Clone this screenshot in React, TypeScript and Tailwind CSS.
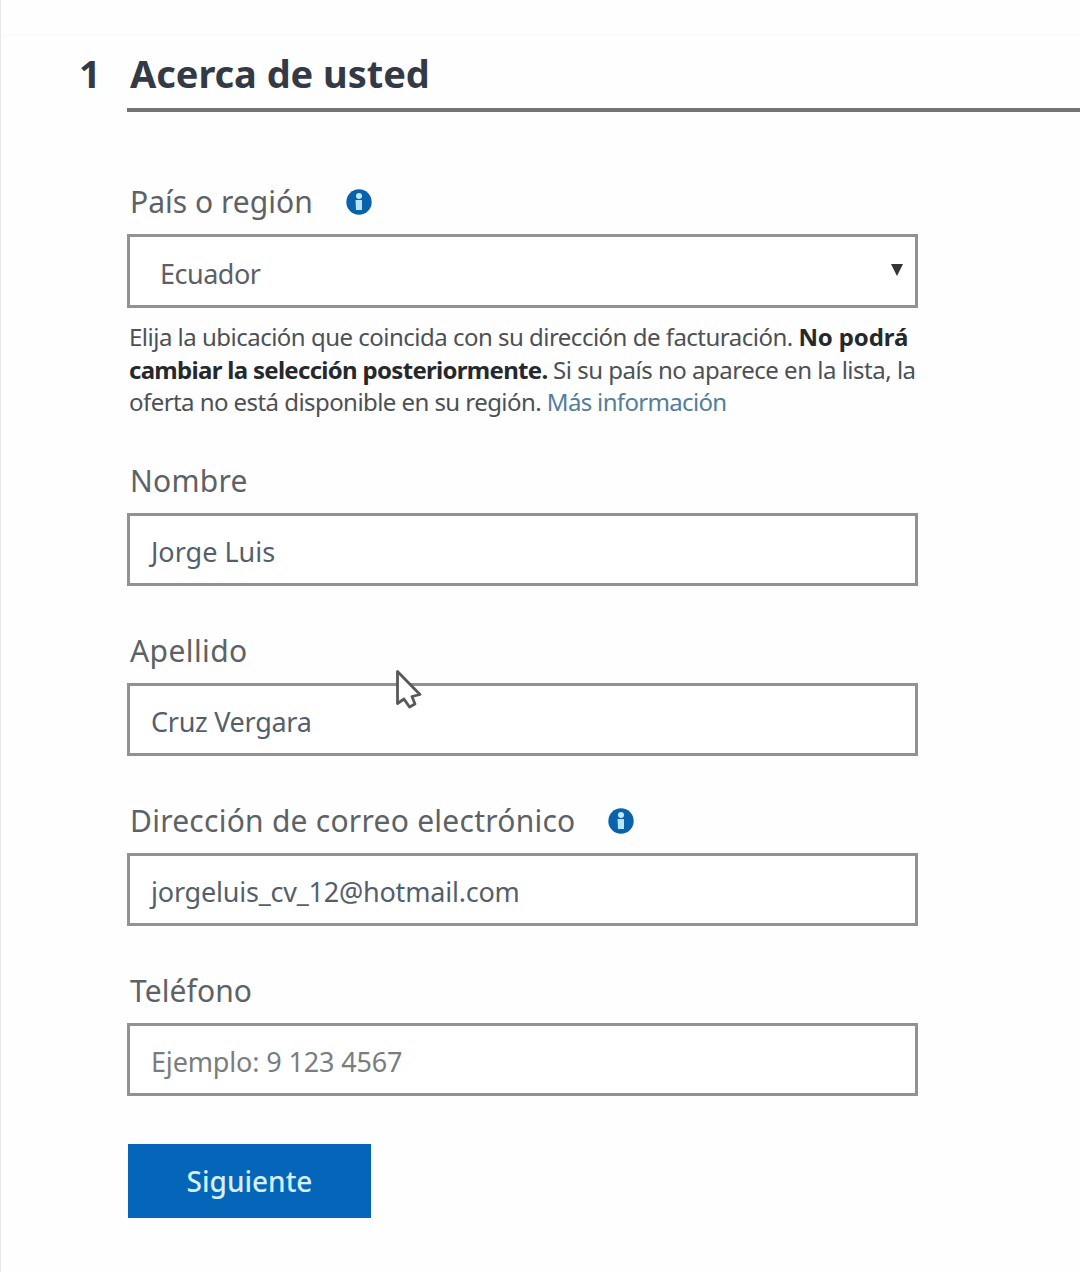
import type { ReactNode } from "react";

function InfoIcon() {
  return (
    <svg viewBox="0 0 26 26" className="size-[26px]" aria-hidden="true">
      <circle cx="13" cy="13" r="12.7" fill="#0862ac" />
      <circle cx="13" cy="7" r="3" fill="#c4e8fc" />
      <path d="M9.500 11h6.500v10h-6z" fill="#b9e2fb" />
    </svg>
  );
}

function Label({ children, tracking, info, gap = "" }: { children: ReactNode; tracking: string; info?: boolean; gap?: string }) {
  return (
    <div className={`flex h-[42px] items-center whitespace-nowrap pl-[3px] text-[30px] leading-[42px] text-[#5d6266] ${gap}`}>
      <span className={tracking}>{children}</span>
      {info && <InfoIcon />}
    </div>
  );
}

function Field({ children, className = "" }: { children: ReactNode; className?: string }) {
  return (
    <div className={`flex w-[791px] items-center whitespace-nowrap border-[3px] border-[#929292] bg-white pl-[21px] pt-1.5 text-[27px] ${className}`}>
      {children}
    </div>
  );
}

function Cursor() {
  return (
    <svg viewBox="0 0 30 42" className="absolute left-[267px] -top-[15px] h-[42px] w-[30px]" aria-hidden="true">
      <path d="M3.500 3.500v32l6.500-4.500 5.500 8 5.500-3-3-7.500 8-2z" fill="#fff" stroke="#58585d" strokeWidth="2.800" strokeLinejoin="round" />
    </svg>
  );
}

export default function App() {
  return (
    <main className="h-[1272px] w-[1080px] overflow-hidden border-l border-[#e9e9e9] bg-[#fefefe] font-['Noto_Sans',sans-serif]">
      <div className="h-9 border-b border-[#fafafa]" />
      <header className="flex h-[76px] pl-[78px] text-[38px] font-bold leading-[74px] text-[#343a45]">
        <span className="w-[48px]">1</span>
        <h1 className="h-full grow whitespace-nowrap border-b-[4px] border-[#747474] pl-[3px]">
          <span className="tracking-[-0.060px]">Acerca de usted</span>
        </h1>
      </header>
      <form className="flex flex-col items-start pl-[126px] pt-[69px]">
        <Label tracking="tracking-[0.030px]" info gap="gap-[33px]">País o región</Label>
        <Field className="mt-[11px] h-[74px] justify-between pr-3 text-[#5c6065]">
          <span className="pl-[9px] tracking-[-0.5px]">Ecuador</span>
          <svg viewBox="0 0 12 12" className="mb-2 size-3" aria-hidden="true"><path d="M0 0h12L6 12z" fill="#353535" /></svg>
        </Field>
        <div className="mt-[13px] whitespace-nowrap pl-0.5 text-[24px] leading-[32.500px] text-[#4d5055]">
          <p><span className="tracking-[-0.510px]">Elija la ubicación que coincida con su dirección de facturación. </span><b className="tracking-[-0.120px] text-[#25282d]">No podrá</b></p>
          <p><b className="tracking-[-0.700px] text-[#25282d]">cambiar la selección posteriormente. </b><span className="tracking-[-0.490px]">Si su país no aparece en la lista, la</span></p>
          <p><span className="tracking-[-0.560px]">oferta no está disponible en su región. </span><a className="tracking-[-0.660px] text-[#527d9d]">Más información</a></p>
        </div>
        <Label tracking="tracking-[0.250px]" gap="mt-[41px]">Nombre</Label>
        <Field className="mt-[11px] h-[73px] text-[#545f6c]"><span>Jorge Luis</span></Field>
        <Label tracking="tracking-[0.400px]" gap="mt-[44px]">Apellido</Label>
        <div className="relative mt-[11px]">
          <Field className="h-[73px] text-[#545f6c]"><span className="tracking-[-0.280px]">Cruz Vergara</span></Field>
          <Cursor />
        </div>
        <Label tracking="tracking-[0.250px]" info gap="mt-[44px] gap-[33px]">Dirección de correo electrónico</Label>
        <Field className="mt-[11px] h-[73px] text-[#545f6c]"><span className="tracking-[-0.210px]">jorgeluis_cv_12@hotmail.com</span></Field>
        <Label tracking="tracking-[0.100px]" gap="mt-[44px]">Teléfono</Label>
        <Field className="mt-[11px] h-[73px] text-[#7a7d80]"><span className="tracking-[-0.150px]">Ejemplo: 9 123 4567</span></Field>
        <button type="button" className="ml-px mt-[48px] flex h-[74px] w-[243px] items-center justify-center bg-[#0565b8] text-[28px] font-medium text-[#d5efff]">
          <span>Siguiente</span>
        </button>
      </form>
    </main>
  );
}
